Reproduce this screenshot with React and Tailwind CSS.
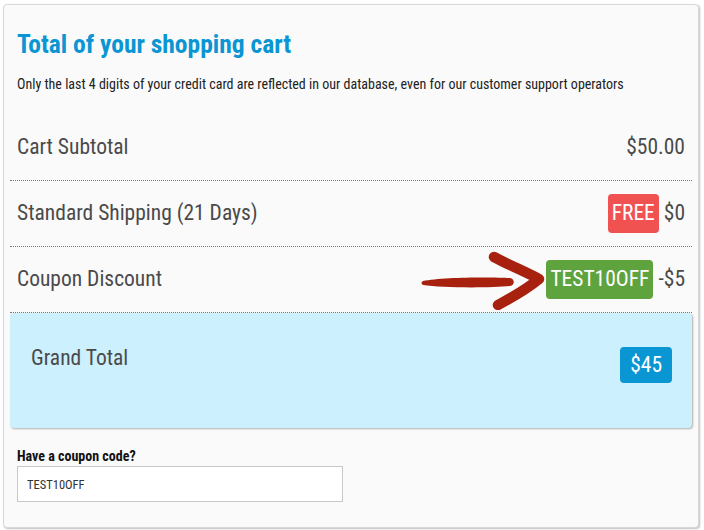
import React from "react";

const ROWS = [
  { label: "Cart Subtotal", value: "$50.00" },
  { label: "Standard Shipping (21 Days)", value: "$0", badge: "FREE", badgeCls: "bg-[#f05151]" },
  { label: "Coupon Discount", value: "-$5", badge: "TEST10OFF", badgeCls: "bg-[#5ea33d]", arrow: true },
];

// hand-drawn pointer towards the coupon badge
const Arrow = () => (
  <svg width="124" height="60" viewBox="0 0 124 60" className="mr-[1px] shrink-0">
    <path
      d="M2 31 C20 27 70 27 89 28 C94 29 94 35 89 36 C70 38 20 38 2 35 C0 34 0 32 2 31 Z"
      fill="#a8200e"
    />
    <path
      d="M73 7 C88 15 105 22 118 29 C106 39 90 48 77 55"
      fill="none"
      stroke="#a8200e"
      strokeWidth="10.5"
      strokeLinecap="round"
      strokeLinejoin="round"
    />
  </svg>
);

export default function App() {
  return (
    <div
      className="w-[704px] h-[530px] bg-white pt-[4px] pl-[3px]"
      style={{ fontFamily: '"Roboto Condensed", "Liberation Sans", sans-serif' }}
    >
      <div className="w-[696px] h-[524px] rounded-[4px] border border-[#d8d8d8] bg-[#fafafa] shadow-[1px_1px_2px_rgba(0,0,0,0.25)] px-[6px]">
        <h1 className="mt-[22px] ml-[7px] text-[25.5px] leading-[34px] font-bold text-[#0a95d3]">
          Total of your shopping cart
        </h1>
        <p className="mt-[14px] ml-[7px] text-[14px] leading-[18px] text-[#222]">
          Only the last 4 digits of your credit card are reflected in our database, even for our customer support operators
        </p>

        <div className="mt-[22px]">
          {ROWS.map((r, i) => (
            <div
              key={i}
              className="h-[66px] flex items-center justify-between px-[7px] border-b border-dotted border-[#777] text-[21.5px] text-[#4a4a4a]"
            >
              <span>{r.label}</span>
              <div className="flex items-center">
                {r.arrow && <Arrow />}
                {r.badge && (
                  <span className={`${r.badgeCls} text-white rounded-[4px] h-[39px] px-[4px] flex items-center mr-[5px]`}>
                    {r.badge}
                  </span>
                )}
                <span>{r.value}</span>
              </div>
            </div>
          ))}
        </div>

        <div className="h-[115px] rounded-[4px] bg-[#ccf0fe] shadow-[1px_1px_2px_rgba(0,0,0,0.3)] flex justify-between items-start pl-[21px] pr-[20px] pt-[32px]">
          <span className="text-[21.5px] leading-[26px] text-[#4a4a4a]">Grand Total</span>
          <span className="mt-[2px] h-[36px] px-[10px] rounded-[4px] bg-[#0a95d3] text-white text-[21.5px] flex items-center">
            $45
          </span>
        </div>

        <div className="mt-[19px] ml-[7px]">
          <label className="block text-[14px] leading-[18px] font-bold text-[#111]">Have a coupon code?</label>
          <input
            readOnly
            value="TEST10OFF"
            className="mt-[1px] w-[326px] h-[36px] border border-[#c8c8c8] bg-white px-[9px] text-[12.5px] text-[#333] outline-none"
            style={{ fontFamily: "inherit" }}
          />
        </div>
      </div>
    </div>
  );
}
